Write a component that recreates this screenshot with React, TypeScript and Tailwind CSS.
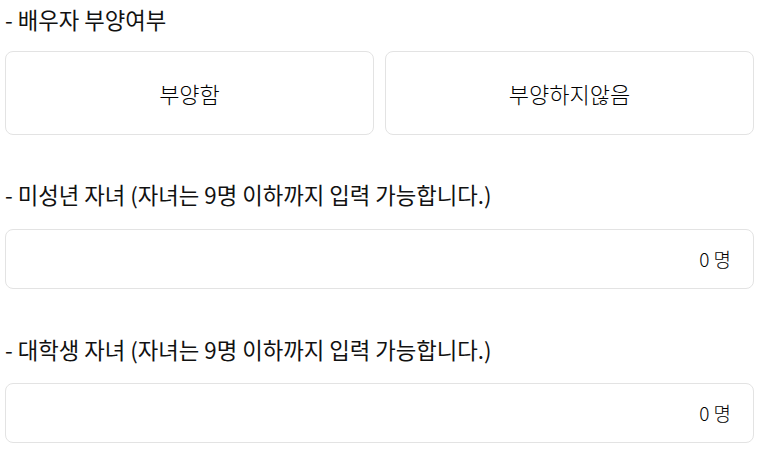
import React from "react";

const font = { fontFamily: '"Noto Sans CJK KR", "Noto Sans", sans-serif' };

function Label({ children, className = "" }: { children: React.ReactNode; className?: string }) {
  return (
    <div className={`text-[22.3px] leading-[32px] font-normal text-[#111] pl-[5px] ${className}`}>{children}</div>
  );
}

function CountInput() {
  return (
    <div className="ml-[5px] mr-[4px] h-[60px] rounded-[8px] border border-[#e3e3e3] bg-white flex items-center justify-end pr-[22px] text-[19px] font-light text-black">
      0 명
    </div>
  );
}

export default function App() {
  return (
    <div className="w-[758px] h-[453px] bg-white overflow-hidden" style={font}>
      <Label className="pt-[3px]">- 배우자 부양여부</Label>
      <div className="mt-[16px] ml-[5px] mr-[4px] flex gap-[11px]">
        <button className="flex-1 h-[84px] rounded-[8px] border border-[#e3e3e3] bg-white text-[22px] font-light text-black">부양함</button>
        <button className="flex-1 h-[84px] rounded-[8px] border border-[#e3e3e3] bg-white text-[22px] font-light text-black">부양하지않음</button>
      </div>
      <Label className="mt-[43px]">- 미성년 자녀 (자녀는 9명 이하까지 입력 가능합니다.)</Label>
      <div className="mt-[19px]">
        <CountInput />
      </div>
      <Label className="mt-[44px]">- 대학생 자녀 (자녀는 9명 이하까지 입력 가능합니다.)</Label>
      <div className="mt-[18px]">
        <CountInput />
      </div>
    </div>
  );
}
